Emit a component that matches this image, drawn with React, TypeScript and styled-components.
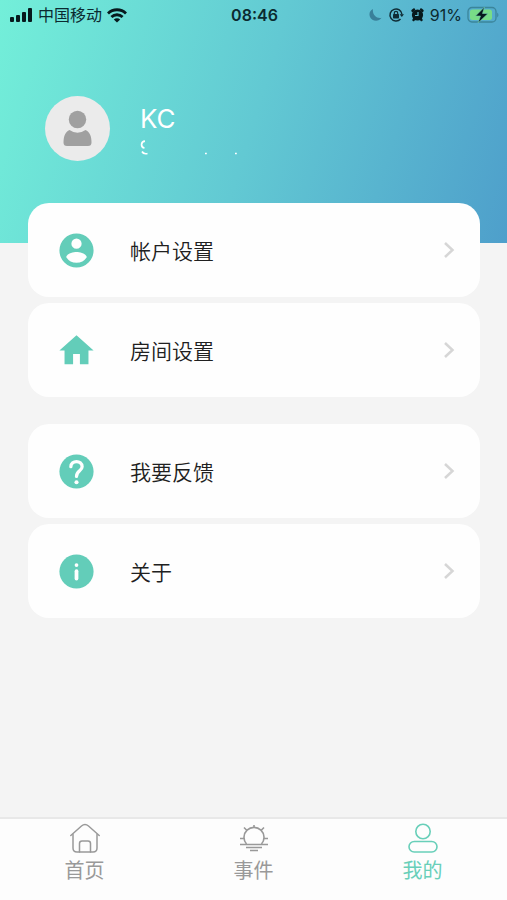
import React from "react";
import styled, { createGlobalStyle } from "styled-components";

const GlobalStyle = createGlobalStyle`
  *, *::before, *::after { box-sizing: border-box; }
  body {
    margin: 0;
    background: #f4f4f4;
    font-family: Inter, "Noto Sans CJK SC", sans-serif;
  }
`;

const Screen = styled.div`
  min-height: 100vh;
  display: flex;
  flex-direction: column;
`;

const Header = styled.header`
  background: linear-gradient(107deg, #73efd9 0%, #62c9d3 50%, #4e9fcb 100%);
  padding-bottom: 82px;
`;

const StatusBar = styled.div`
  display: grid;
  grid-template-columns: 1fr auto 1fr;
  align-items: center;
  height: 30px;
  padding: 0 8px 0 10px;
  color: #0b2a30;
  font-size: 16px;
  line-height: 24px;
`;

const StatusGroup = styled.div<{ $end?: boolean }>`
  display: flex;
  align-items: center;
  justify-content: ${(p) => (p.$end ? "flex-end" : "flex-start")};
  gap: 5px;
  white-space: nowrap;
`;

const Clock = styled.time`
  font-weight: 600;
`;

const Profile = styled.div`
  display: flex;
  align-items: center;
  gap: 30px;
  padding: 66px 28px 0 45px;
`;

const Avatar = styled.div`
  display: flex;
  width: 65px;
  height: 65px;
  border-radius: 50%;
  background: #ebebeb;
`;

const Identity = styled.div`
  display: flex;
  flex-direction: column;
  gap: 3px;
`;

const Name = styled.h1`
  margin: 0;
  color: #fff;
  font-size: 26px;
  font-weight: 400;
  line-height: 36px;
`;

const Main = styled.main`
  flex: 1;
  display: flex;
  flex-direction: column;
  gap: 27px;
  margin-top: -40px;
  padding: 0 27px 28px 28px;
`;

const Group = styled.div`
  display: flex;
  flex-direction: column;
  gap: 6px;
`;

const Row = styled.button`
  display: flex;
  align-items: center;
  width: 100%;
  height: 94px;
  padding: 0 20px 0 28px;
  border: 0;
  border-radius: 21px;
  background: #fefefe;
  color: #202020;
  font: inherit;
  font-size: 21px;
  font-weight: 350;
  line-height: 32px;
  text-align: left;
  cursor: pointer;
`;

const RowLabel = styled.span`
  flex: 1;
  padding: 3px 0 0 33px;
`;

const TabBar = styled.nav`
  display: grid;
  grid-template-columns: repeat(3, 1fr);
  height: 83px;
  border-top: 2px solid #e8e8e8;
  background: #fdfdfd;
`;

const Tab = styled.a<{ $active?: boolean }>`
  display: flex;
  flex-direction: column;
  align-items: center;
  padding-top: 4px;
  color: ${(p) => (p.$active ? "#68cfb9" : "#999")};
  font-size: 20px;
  line-height: 32px;
  text-decoration: none;
`;

const TEAL = "#63cdb9";

const Signal = () => (
  <svg width="23" height="15" viewBox="0 0 23 15" fill="#07191d" aria-hidden="true">
    <rect x="0" y="9" width="4" height="5" rx="1" />
    <rect x="6" y="7" width="4" height="7" rx="1" />
    <rect x="12" y="4" width="4" height="10" rx="1" />
    <rect x="18" y="0" width="4" height="14" rx="1" />
  </svg>
);

const Wifi = () => (
  <svg width="20" height="15" viewBox="0 0 20 15" fill="none" stroke="#07191d" strokeWidth="2.8" aria-hidden="true">
    <path d="M1 5.4C6 .5 14 .5 19 5.4" />
    <path d="M4.4 9C7.6 6 12.4 6 15.6 9" />
    <path d="M10 14.6 6.8 11.4C8.6 9.9 11.4 9.9 13.2 11.4Z" fill="#07191d" stroke="none" />
  </svg>
);

const Moon = () => (
  <svg width="14" height="14" viewBox="0 0 14 14" fill="#39809a" aria-hidden="true">
    <path d="M4 1C.8 2.3-.3 5.7 1 9 2.7 13.3 9.5 14.5 12.6 9.8 7.5 11 3 6.5 4 1Z" />
  </svg>
);

const RotationLock = () => (
  <svg width="16" height="16" viewBox="0 0 16 16" fill="none" stroke="#102d36" strokeWidth="1.5" aria-hidden="true">
    <path d="M12.5 12A6 6 0 1 1 14 7.5" />
    <path d="M11.6 7.3h4.4L13.8 10Z" fill="#102d36" stroke="none" />
    <rect x="5" y="7" width="6" height="4.5" rx=".7" fill="#102d36" stroke="none" />
    <path d="M6.3 7.5V6a1.7 1.7 0 0 1 3.4 0v1.5" strokeWidth="1.2" />
  </svg>
);

const Alarm = () => (
  <svg width="16" height="16" viewBox="0 0 16 16" aria-hidden="true">
    <circle cx="8.5" cy="8" r="5.6" fill="#07191d" />
    <path d="M3.5 3.7 5 2.5M13.5 3.7 12 2.5M4.5 13l1-1.5M12.5 13l-1-1.500" stroke="#07191d" strokeWidth="2.4" strokeLinecap="round" />
    <path d="M9 5V8.500H6" fill="none" stroke="#58b8cc" strokeWidth="1.2" />
  </svg>
);

const Battery = () => (
  <svg width="32" height="18" viewBox="0 0 32 18" aria-hidden="true">
    <rect x="1" y="1.5" width="28" height="14.5" rx="4" fill="none" stroke="#3b859b" strokeWidth="1.3" />
    <rect x="3" y="3.5" width="22" height="10.5" rx="2.5" fill="#78dc87" />
    <path d="M30.2 6.5q2.500 2.500 0 5Z" fill="#3b859b" />
    <path d="M17.500 1 8.500 10h5L11 17 21 7.500h-5.5Z" fill="#07191d" stroke="#72ccb0" strokeWidth=".6" />
  </svg>
);

const AvatarFigure = () => (
  <svg width="65" height="65" viewBox="0 0 65 65" fill="#a0a0a0" aria-hidden="true">
    <circle cx="32.5" cy="23.5" r="8.7" />
    <path d="M24.5 34Q32.5 39.5 40.5 34C44.5 35.5 46.5 40 46.5 46.5Q46.5 50 43 50H22Q18.5 50 18.5 46.5C18.5 40 20.5 35.5 24.5 34Z" />
  </svg>
);

const MaskedAccount = () => (
  <svg width="100" height="16" viewBox="0 0 100 16" fill="none" stroke="#fff" strokeWidth="1.7" role="img" aria-label="Account">
    <path d="M5 1.2C.5 1.5.5 7.5 4.5 8M2 11.5Q3.5 14.5 7.5 13.5" />
    <path d="M65 13.5h1.8M95 13.5h1.8" />
  </svg>
);

const AccountIcon = () => (
  <svg width="41" height="41" viewBox="0 0 24 24" fill={TEAL} aria-hidden="true">
    <path d="M12 2a10 10 0 1 0 0 20 10 10 0 0 0 0-20Zm0 3a3 3 0 1 1 0 6 3 3 0 0 1 0-6Zm0 14.2a7.2 7.2 0 0 1-6-3.22c.03-1.99 4-3.08 6-3.08s5.97 1.09 6 3.08a7.2 7.2 0 0 1-6 3.22Z" />
  </svg>
);

const HouseIcon = () => (
  <svg width="41" height="41" viewBox="0 0 24 24" fill={TEAL} aria-hidden="true">
    <path d="M10 20v-6h4v6h5v-8h3L12 3 2 12h3v8Z" />
  </svg>
);

const HelpIcon = () => (
  <svg width="41" height="41" viewBox="0 0 24 24" aria-hidden="true">
    <circle cx="12" cy="12" r="10" fill={TEAL} />
    <path d="M8.7 9.2C8.8 5.2 15.2 5.2 15.3 9.2C15.3 11.7 12 11.6 12 14.9" fill="none" stroke="#fff" strokeWidth="1.9" strokeLinecap="round" />
    <circle cx="12" cy="18.3" r="1.2" fill="#fff" />
  </svg>
);

const InfoIcon = () => (
  <svg width="41" height="41" viewBox="0 0 24 24" aria-hidden="true">
    <circle cx="12" cy="12" r="10" fill={TEAL} />
    <circle cx="12" cy="8.2" r="1.1" fill="#fff" />
    <path d="M12 11.8v4.3" stroke="#fff" strokeWidth="2.2" strokeLinecap="round" />
  </svg>
);

const Chevron = () => (
  <svg width="22" height="22" viewBox="0 0 22 22" fill="none" stroke="#d6d6d6" strokeWidth="2.5" aria-hidden="true">
    <path d="M7 4l7.5 7L7 18" />
  </svg>
);

const HomeTabIcon = () => (
  <svg width="32" height="32" viewBox="0 0 32 32" fill="none" stroke="currentColor" strokeWidth="1.5" strokeLinecap="round" aria-hidden="true">
    <path d="M1.8 12.5 12.5 3Q16 0 19.5 3L30.2 12.5" />
    <path d="M4 11.5V25Q4 29 8 29H24Q28 29 28 25V11.5" />
    <path d="M10.5 29V20.5Q10.5 18 13 18H19Q21.5 18 21.5 20.5V29" />
  </svg>
);

const EventTabIcon = () => (
  <svg width="32" height="32" viewBox="0 0 32 32" fill="none" stroke="currentColor" strokeWidth="1.6" aria-hidden="true">
    <path d="M8.5 21A10 10 0 1 1 23.5 21" />
    <path d="M2 21.5H30M8 24.5H24M12 27.5H20" />
    <path d="M16 5V2M9 7.5 6 4.5M23 7.500 26 4.500M6 15.5H2M26 15.5H30" />
  </svg>
);

const ProfileTabIcon = () => (
  <svg width="32" height="32" viewBox="0 0 32 32" fill="none" stroke="currentColor" strokeWidth="1.6" aria-hidden="true">
    <circle cx="16" cy="8.5" r="7.2" />
    <rect x="2" y="18.5" width="28" height="10.5" rx="5.25" />
  </svg>
);

const GROUPS = [
  [
    { label: "帐户设置", Icon: AccountIcon },
    { label: "房间设置", Icon: HouseIcon },
  ],
  [
    { label: "我要反馈", Icon: HelpIcon },
    { label: "关于", Icon: InfoIcon },
  ],
];

const TABS = [
  { label: "首页", href: "#home", Icon: HomeTabIcon },
  { label: "事件", href: "#events", Icon: EventTabIcon },
  { label: "我的", href: "#me", Icon: ProfileTabIcon, active: true },
];

export default function App() {
  return (
    <>
      <GlobalStyle />
      <Screen>
        <Header>
          <StatusBar>
            <StatusGroup>
              <Signal />
              <span>中国移动</span>
              <Wifi />
            </StatusGroup>
            <Clock>08:46</Clock>
            <StatusGroup $end>
              <Moon />
              <RotationLock />
              <Alarm />
              <span>91%</span>
              <Battery />
            </StatusGroup>
          </StatusBar>
          <Profile>
            <Avatar>
              <AvatarFigure />
            </Avatar>
            <Identity>
              <Name>KC</Name>
              <MaskedAccount />
            </Identity>
          </Profile>
        </Header>
        <Main>
          {GROUPS.map((rows) => (
            <Group key={rows[0].label}>
              {rows.map(({ label, Icon }) => (
                <Row key={label} type="button">
                  <Icon />
                  <RowLabel>{label}</RowLabel>
                  <Chevron />
                </Row>
              ))}
            </Group>
          ))}
        </Main>
        <TabBar>
          {TABS.map(({ label, href, Icon, active }) => (
            <Tab key={label} href={href} $active={active} aria-current={active ? "page" : undefined}>
              <Icon />
              {label}
            </Tab>
          ))}
        </TabBar>
      </Screen>
    </>
  );
}
